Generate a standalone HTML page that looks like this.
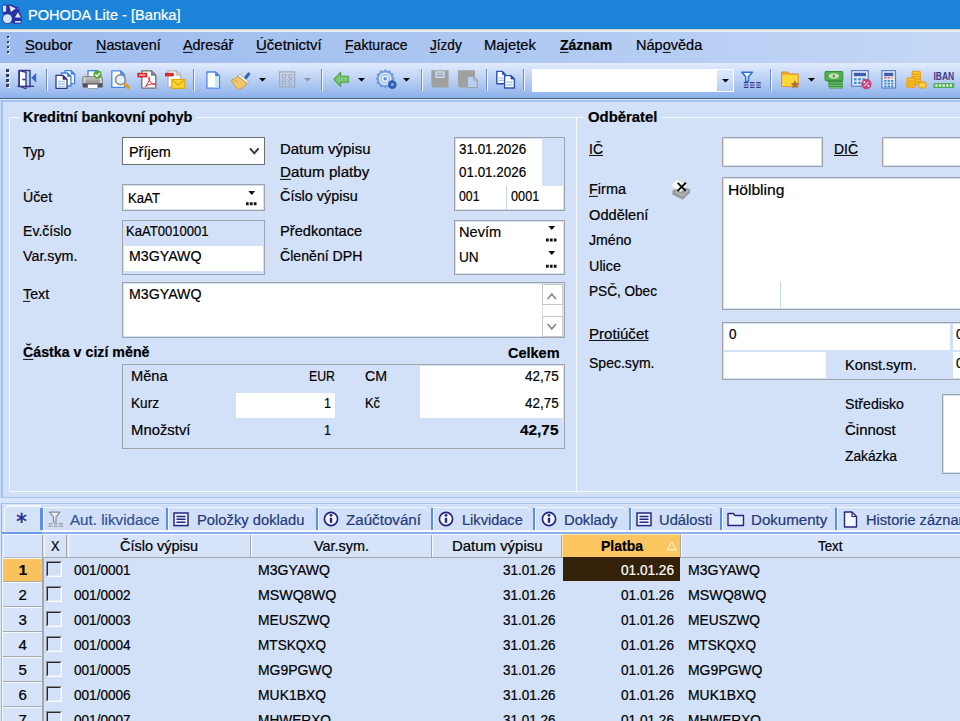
<!DOCTYPE html>
<html lang="cs"><head><meta charset="utf-8"><title>POHODA Lite - [Banka]</title>
<style>
html,body{margin:0;padding:0;}
body{width:960px;height:721px;overflow:hidden;position:relative;background:#d3e1f8;
 font-family:"Liberation Sans",sans-serif;font-size:15px;color:#000;}
#app{position:absolute;left:0;top:0;width:960px;height:721px;overflow:hidden;}
.r{position:absolute;box-sizing:content-box;}
.t{position:absolute;white-space:pre;line-height:18px;height:18px;font-size:16px;transform-origin:0 0;-webkit-text-stroke:0.220px currentColor;}
.t u{text-decoration:underline;text-underline-offset:1.500px;text-decoration-thickness:1px;}
svg{display:block;overflow:visible;}
.cb{width:14.200px;height:14.200px;border:1px solid;border-color:#8a8d92 #fdfeff #fdfeff #8a8d92;}
.cb i{display:block;box-sizing:border-box;width:100%;height:100%;border-style:solid;border-width:1.700px 1px 1px 1.700px;border-color:#2a2a2a #e6ecf7 #e6ecf7 #2a2a2a;}
</style></head>
<body><div id="app">
<div id="title" class="r" style="left:0;top:0;width:960px;height:29px;background:#1b84d8"></div>
<div class="r " style="left:0px;top:29px;width:960px;height:1px;background:#d2cfc9;"></div>
<div class="r " style="left:0px;top:30px;width:960px;height:2px;background:#e8edf7;"></div>
<div id="menubar" class="r" style="left:0;top:32px;width:960px;height:31px;background:linear-gradient(90deg,#9dbbee 0%,#a9c4f0 40%,#c4d7f6 100%)"></div>
<div id="toolbar" class="r" style="left:0;top:63px;width:960px;height:35px;border-radius:3px 0 0 0;background:linear-gradient(180deg,#e1ebfc 0%,#c9daf7 30%,#abc6f1 65%,#8db0ea 100%)"></div>
<div class="r " style="left:0px;top:98px;width:960px;height:1px;background:#4d6288;"></div>
<div class="r " style="left:0px;top:99px;width:960px;height:1px;background:#dbe6fa;"></div>
<div class="r " style="left:7.7px;top:37.0px;width:2.4px;height:2.4px;background:#ffffff;"></div>
<div class="r " style="left:6.5px;top:35.8px;width:2.4px;height:2.4px;background:#2f3d60;"></div>
<div class="r " style="left:7.7px;top:42.0px;width:2.4px;height:2.4px;background:#ffffff;"></div>
<div class="r " style="left:6.5px;top:40.8px;width:2.4px;height:2.4px;background:#2f3d60;"></div>
<div class="r " style="left:7.7px;top:46.9px;width:2.4px;height:2.4px;background:#ffffff;"></div>
<div class="r " style="left:6.5px;top:45.7px;width:2.4px;height:2.4px;background:#2f3d60;"></div>
<div class="r " style="left:7.7px;top:51.9px;width:2.4px;height:2.4px;background:#ffffff;"></div>
<div class="r " style="left:6.5px;top:50.6px;width:2.4px;height:2.4px;background:#2f3d60;"></div>
<div class="r " style="left:7.5px;top:70.5px;width:2.4px;height:2.4px;background:#ffffff;"></div>
<div class="r " style="left:6.3px;top:69.3px;width:2.4px;height:2.4px;background:#2f3d60;"></div>
<div class="r " style="left:7.5px;top:75.5px;width:2.4px;height:2.4px;background:#ffffff;"></div>
<div class="r " style="left:6.3px;top:74.2px;width:2.4px;height:2.4px;background:#2f3d60;"></div>
<div class="r " style="left:7.5px;top:80.4px;width:2.4px;height:2.4px;background:#ffffff;"></div>
<div class="r " style="left:6.3px;top:79.2px;width:2.4px;height:2.4px;background:#2f3d60;"></div>
<div class="r " style="left:7.5px;top:85.4px;width:2.4px;height:2.4px;background:#ffffff;"></div>
<div class="r " style="left:6.3px;top:84.2px;width:2.4px;height:2.4px;background:#2f3d60;"></div>
<div class="r " style="left:46px;top:69px;width:1px;height:21px;background:#6f8ec8;"></div>
<div class="r " style="left:47px;top:70px;width:1px;height:21px;background:#f2f6fd;"></div>
<div class="r " style="left:193px;top:69px;width:1px;height:21px;background:#6f8ec8;"></div>
<div class="r " style="left:194px;top:70px;width:1px;height:21px;background:#f2f6fd;"></div>
<div class="r " style="left:320.5px;top:69px;width:1px;height:21px;background:#6f8ec8;"></div>
<div class="r " style="left:321.5px;top:70px;width:1px;height:21px;background:#f2f6fd;"></div>
<div class="r " style="left:420.5px;top:69px;width:1px;height:21px;background:#6f8ec8;"></div>
<div class="r " style="left:421.5px;top:70px;width:1px;height:21px;background:#f2f6fd;"></div>
<div class="r " style="left:486px;top:69px;width:1px;height:21px;background:#6f8ec8;"></div>
<div class="r " style="left:487px;top:70px;width:1px;height:21px;background:#f2f6fd;"></div>
<div class="r " style="left:523px;top:69px;width:1px;height:21px;background:#6f8ec8;"></div>
<div class="r " style="left:524px;top:70px;width:1px;height:21px;background:#f2f6fd;"></div>
<div class="r " style="left:770px;top:69px;width:1px;height:21px;background:#6f8ec8;"></div>
<div class="r " style="left:771px;top:70px;width:1px;height:21px;background:#f2f6fd;"></div>
<svg class="r" style="left:259px;top:78px" width="7" height="4" viewBox="0 0 7 4"><path d="M0 0h7L3.5 3.6z" fill="#000"/></svg>
<svg class="r" style="left:358.3px;top:78px" width="7" height="4" viewBox="0 0 7 4"><path d="M0 0h7L3.5 3.6z" fill="#000"/></svg>
<svg class="r" style="left:403px;top:78px" width="7" height="4" viewBox="0 0 7 4"><path d="M0 0h7L3.5 3.6z" fill="#000"/></svg>
<svg class="r" style="left:303.5px;top:78px" width="7" height="4" viewBox="0 0 7 4"><path d="M0 0h7L3.5 3.6z" fill="#8d95a5"/></svg>
<svg class="r" style="left:807.5px;top:78px" width="7" height="4" viewBox="0 0 7 4"><path d="M0 0h7L3.5 3.6z" fill="#000"/></svg>
<div class="r" style="left:532px;top:69px;width:202px;height:23px;background:#fff;"></div>
<div class="r" style="left:717px;top:70px;width:16px;height:21px;background:linear-gradient(180deg,#dfe9fb,#b9cff3)"></div>
<svg class="r" style="left:722px;top:79px" width="7" height="4" viewBox="0 0 7 4"><path d="M0 0h7L3.5 3.6z" fill="#000"/></svg>
<svg class="r" style="left:0;top:62px" width="960" height="36" viewBox="0 62 960 36"><g>
<rect x="19" y="70.5" width="11" height="16" fill="#a9def6" stroke="#3b3584" stroke-width="1.4"/>
<path d="M19.3 70.6 L26 72.2 L26 88.6 L19.3 86.2 Z" fill="#fff" stroke="#3b3584" stroke-width="1.4" stroke-linejoin="round"/>
<path d="M17.5 86.3 H34" stroke="#3b3584" stroke-width="1.3"/>
<path d="M22.3 79.5 h3.2" stroke="#3b3584" stroke-width="1.6"/>
<path d="M31.3 77.7 L36.2 73 V82.5 Z" fill="#3567d0"/></g>
<g><path d="M65 70.7 H71.1 L74.6 74.2 V83.7 H65 Z" fill="#fff" stroke="#3f7fe4" stroke-width="1.3" stroke-linejoin="round"/><path d="M71.1 70.7 V74.2 H74.6 Z" fill="#3f7fe4" stroke="#3f7fe4" stroke-width="0.78" stroke-linejoin="round"/><path d="M61.3 73 H67.39999999999999 L70.89999999999999 76.5 V86 H61.3 Z" fill="#fff" stroke="#3f7fe4" stroke-width="1.3" stroke-linejoin="round"/><path d="M67.39999999999999 73 V76.5 H70.89999999999999 Z" fill="#3f7fe4" stroke="#3f7fe4" stroke-width="0.78" stroke-linejoin="round"/><path d="M56 75.3 H63 L67 79.3 V88.3 H56 Z" fill="#fff" stroke="#3b3584" stroke-width="1.3" stroke-linejoin="round"/><path d="M63 75.3 V79.3 H67 Z" fill="#3b3584" stroke="#3b3584" stroke-width="0.78" stroke-linejoin="round"/><path d="M58 81.5h7M58 84h7M58 86.3h7" stroke="#9fcdea" stroke-width="1.3"/></g>
<g><rect x="88" y="70.7" width="9.5" height="7" fill="#fff" stroke="#3f7fe4" stroke-width="1.3"/>
<rect x="82.8" y="76.6" width="19.6" height="7.400" rx="1.4" fill="#d4d4d4" stroke="#707070" stroke-width=".9"/>
<rect x="85.600" y="77.600" width="14" height="5.600" fill="#b4b4b4"/><rect x="85.600" y="80.400" width="14" height="2.800" fill="#9c9c9c"/>
<path d="M82.500 83.200 h20.200 v3.400 q0 1 -1 1 h-18.200 q-1 0 -1 -1z" fill="#545454"/>
<rect x="87.8" y="84.2" width="10" height="4.200" fill="#fff" stroke="#6a6a6a" stroke-width=".5"/>
<circle cx="97.6" cy="74.6" r="4.1" fill="#55a83c"/><path d="M95.4 74.6 l1.6 1.7 l3 -3.2" stroke="#fff" stroke-width="1.4" fill="none"/></g>
<g><path d="M111.8 70.8 H120.6 L124.6 74.8 V87.4 H111.8 Z" fill="#fff" stroke="#4a86e8" stroke-width="1.3" stroke-linejoin="round"/><path d="M120.6 70.8 V74.8 H124.6 Z" fill="#4a86e8" stroke="#4a86e8" stroke-width="0.78" stroke-linejoin="round"/><circle cx="120.4" cy="79.8" r="4.9" fill="#e2f1fb" stroke="#8a8f96" stroke-width="1.7"/><path d="M125.300 84.400 l3.200 3.100" stroke="#e39a22" stroke-width="3.200" stroke-linecap="round"/></g>
<g><path d="M141.8 70.8 H151.3 L155.8 75.3 V88.19999999999999 H141.8 Z" fill="#fff" stroke="#6f6f6f" stroke-width="1.3" stroke-linejoin="round"/><path d="M151.3 70.8 V75.3 H155.8 Z" fill="#8a8a8a" stroke="#6f6f6f" stroke-width="0.78" stroke-linejoin="round"/><rect x="137.3" y="72.8" width="10" height="4.6" fill="#d7282f"/><path d="M139 75.1h6.6" stroke="#f2a6a8" stroke-width="1.6"/><path d="M145.200 86.500 C147.500 84.500 149.500 80.500 149.600 78.200 C149.700 76.800 148.500 76.800 148.700 78.400 C149 81 151.500 83.800 154.600 84.600 C156 85 156 83.700 154.400 83.700 C151 83.700 147.500 85 145.200 86.500 Z" fill="none" stroke="#d7282f" stroke-width="1" stroke-linejoin="round"/></g>
<g><path d="M168 70.8 H176.1 L180.6 75.3 V87.0 H168 Z" fill="#fff" stroke="#b5b5b5" stroke-width="1.3" stroke-linejoin="round"/><path d="M176.1 70.8 V75.3 H180.6 Z" fill="#cfcfcf" stroke="#b5b5b5" stroke-width="0.78" stroke-linejoin="round"/><rect x="165" y="72.8" width="8.8" height="3.6" fill="#d7282f"/><rect x="171.8" y="79.5" width="13" height="8.8" fill="#ffd633" stroke="#e3a300" stroke-width="1.1"/><path d="M172.2 80 l6.1 5 l6.1 -5" fill="none" stroke="#e3a300" stroke-width="1.1"/></g>
<g><path d="M206.9 72 H215.5 L219.5 76 V88.2 H206.9 Z" fill="#fff" stroke="#4a86e8" stroke-width="1.3" stroke-linejoin="round"/><path d="M215.5 72 V76 H219.5 Z" fill="#4a86e8" stroke="#4a86e8" stroke-width="0.78" stroke-linejoin="round"/><rect x="215" y="76.5" width="3.9" height="11" fill="#c6e9f4"/></g>
<g><path d="M249.2 72.6 q1.4 .6 .9 2 l-4.2 5.6 l-2.6 -2 l4.4 -5.4 q.7 -.6 1.5 -.2z" fill="#2e66bd"/>
<path d="M239.5 74 l9.2 7.6 l-1.6 1.8 l-9.2 -7.4z" fill="#f4f4f4" stroke="#9a9a9a" stroke-width=".7"/>
<path d="M238 76.2 l8.8 7.2 q-3.5 5.2 -8.2 6.2 q-4 -2.2 -7.3 -9.6 q4.2 -.6 6.7 -3.8z" fill="#f2c76b" stroke="#c69a3e" stroke-width=".9" stroke-linejoin="round"/>
<path d="M234.5 80.8 q1.8 .9 3.3 .4" stroke="#c69a3e" stroke-width=".8" fill="none"/></g>
<g fill="none" stroke="#a6a9ae"><rect x="279.6" y="71.9" width="15" height="15" stroke-width="1.3"/>
<rect x="282.4" y="74.6" width="3.2" height="3.2" stroke-width="1"/><rect x="288.8" y="74.6" width="3.2" height="3.2" stroke-width="1"/><rect x="282.4" y="81" width="3.2" height="3.2" stroke-width="1"/>
<path d="M287 74.5v1.5M282 79.4h1.2M284.5 79.4h1.2M287 79.4l2 1.2l2-1.4l1.6 1.2M288 82l2 1l1.5-1.6M288 84.6h2M291.5 83v2" stroke-width="1"/></g>
<path d="M333.9 79.3 L340.6 72.4 V76.3 H348.3 V82.3 H340.6 V86.3 Z" fill="#7cc877" stroke="#4c9c49" stroke-width="1.1" stroke-linejoin="round"/>
<g><polygon points="394.4,78.8 392.5,80.8 393.2,83.4 390.6,84.2 389.8,86.8 387.2,86.1 385.2,88.0 383.2,86.1 380.6,86.8 379.8,84.2 377.2,83.4 377.9,80.8 376.0,78.8 377.9,76.8 377.2,74.2 379.8,73.4 380.6,70.8 383.2,71.5 385.2,69.6 387.2,71.5 389.8,70.8 390.6,73.4 393.2,74.2 392.5,76.8" fill="#76a2e2" stroke="#6b98dc" stroke-width="1" stroke-linejoin="round"/><circle cx="385.2" cy="78.8" r="6.3" fill="#e4edfa"/><circle cx="385.2" cy="78.8" r="4.2" fill="none" stroke="#8fb3ea" stroke-width="1.2"/><circle cx="385.2" cy="78.8" r="1.7" fill="#5f8fdb"/><circle cx="392.3" cy="84.6" r="4.3" fill="#2a5fb4"/><circle cx="392.3" cy="84.6" r="1.5" fill="#8db1ea"/></g>
<g><path d="M431.3 70.2 h17.3 v17.4 h-15.8 l-1.5 -1.5z" fill="#a1a1a1"/><rect x="435.2" y="71.2" width="9.6" height="6.8" fill="#c6d5f1"/><path d="M436.5 73.3h7M436.5 75.6h7" stroke="#a1a1a1" stroke-width="1.1"/></g>
<g><path d="M458 70.2 h17 v17.4 h-15.5 l-1.5 -1.5z" fill="#a1a1a1"/><path d="M467.4 76.4 h6 l3.8 3.6 v7.6 h-9.8z" fill="#b9cef3" stroke="#a1a1a1" stroke-width="1.1"/><path d="M473.4 76.4 v3.6 h3.8" fill="none" stroke="#a1a1a1" stroke-width="1"/></g>
<g><path d="M496.8 71.4 H502.40000000000003 L505.40000000000003 74.4 V83.80000000000001 H496.8 Z" fill="#fff" stroke="#2b50ae" stroke-width="1.4" stroke-linejoin="round"/><path d="M502.40000000000003 71.4 V74.4 H505.40000000000003 Z" fill="#2b50ae" stroke="#2b50ae" stroke-width="0.84" stroke-linejoin="round"/><path d="M498.5 78h5M498.5 80.4h5" stroke="#8fc3e6" stroke-width="1.2"/><path d="M504.6 75.6 H511.0 L514.4 79.0 V88.0 H504.6 Z" fill="#fff" stroke="#2b50ae" stroke-width="1.4" stroke-linejoin="round"/><path d="M511.0 75.6 V79.0 H514.4 Z" fill="#2b50ae" stroke="#2b50ae" stroke-width="0.84" stroke-linejoin="round"/><path d="M506.5 82.2h6M506.5 84.8h6" stroke="#8fc3e6" stroke-width="1.2"/></g>
<g><path d="M741.8 72.2 h10.6 l-3.9 4.6 v4.6 h-2.8 v-4.6z" fill="#eef5fd" stroke="#2f70d8" stroke-width="1.5" stroke-linejoin="round"/>
<path d="M743.8 82.6h4.6M750 82.6h4.6M756.2 82.6h4.6M743.8 85h4.6M750 85h4.6M756.2 85h4.6M743.8 87.4h4.6M750 87.4h4.6M756.2 87.4h4.6" stroke="#3a3d8f" stroke-width="1.2"/></g>
<g><path d="M781.6 72 h6.4 l1.8 2 h8.4 v12.4 h-16.6z" fill="#f0a93c" stroke="#d9942c" stroke-width="1"/>
<rect x="782.3" y="75" width="15.4" height="11" fill="#fdd835"/>
<path d="M795 80.2 l1.3 2.9 l3.1 .3 l-2.3 2.1 l.7 3.1 l-2.8 -1.6 l-2.8 1.6 l.7 -3.1 l-2.3 -2.1 l3.1 -.3z" fill="#a9713d"/></g>
<g><path d="M827.5 80 h15.3 v8.6 h-13.8z" fill="#3f9444"/><path d="M828 83h14.5M828.6 85.4h14M829.2 87.6h13.4" stroke="#7cc67f" stroke-width=".9"/>
<rect x="825" y="71.5" width="17.8" height="9.2" rx="1" fill="#4caf50" stroke="#388e3c" stroke-width="1"/>
<ellipse cx="833.9" cy="76.1" rx="5.2" ry="2.8" fill="#cfe0b4"/><path d="M832.6 76.1h2.6M833.9 74.6v3" stroke="#388e3c" stroke-width="1"/></g>
<g><rect x="851.6" y="70.6" width="16.6" height="15.6" fill="#e2eaf8" stroke="#5a80c4" stroke-width="1.2"/><rect x="853.8000000000001" y="72.8" width="12.200000000000001" height="3.4" fill="#3d5ea8"/><rect x="854.0" y="78.2" width="2.6" height="2.2" fill="#3f8bd0"/><rect x="858.2" y="78.2" width="2.6" height="2.2" fill="#3f8bd0"/><rect x="862.4" y="78.2" width="2.6" height="2.2" fill="#3f8bd0"/><rect x="854.0" y="81.8" width="2.6" height="2.2" fill="#3f8bd0"/><rect x="858.2" y="81.8" width="2.6" height="2.2" fill="#3f8bd0"/><rect x="862.4" y="81.8" width="2.6" height="2.2" fill="#3f8bd0"/><circle cx="866.4" cy="84" r="5.2" fill="#c7447f"/><path d="M864 86.4 l4.8 -4.8" stroke="#fff" stroke-width="1"/><circle cx="864.4" cy="82.2" r="1" fill="#fff"/><circle cx="868.4" cy="85.8" r="1" fill="#fff"/></g>
<g><rect x="881.9" y="70.6" width="13.6" height="17.4" fill="#e2eaf8" stroke="#5a80c4" stroke-width="1.2"/><rect x="884.1" y="72.8" width="9.2" height="3.4" fill="#3d5ea8"/><rect x="884.2" y="77.3" width="2.3" height="1.2" fill="#e0443c"/><rect x="887.6" y="77.3" width="2.3" height="1.2" fill="#e0443c"/><rect x="891.0" y="77.3" width="2.3" height="1.2" fill="#f0a800"/><rect x="884.2" y="80.0" width="2.3" height="1.8" fill="#3f8bd0"/><rect x="887.6" y="80.0" width="2.3" height="1.8" fill="#3f8bd0"/><rect x="891.0" y="80.0" width="2.3" height="1.8" fill="#3f8bd0"/><rect x="884.2" y="82.7" width="2.3" height="1.8" fill="#3f8bd0"/><rect x="887.6" y="82.7" width="2.3" height="1.8" fill="#3f8bd0"/><rect x="891.0" y="82.7" width="2.3" height="1.8" fill="#3f8bd0"/><rect x="884.2" y="85.4" width="2.3" height="1.8" fill="#3f8bd0"/><rect x="887.6" y="85.4" width="2.3" height="1.8" fill="#3f8bd0"/><rect x="891.0" y="85.4" width="2.3" height="1.8" fill="#3f8bd0"/></g>
<g><rect x="912" y="80.8" width="8.6" height="3.2" rx="1.4" fill="#f9c22c" stroke="#e29a12" stroke-width=".9"/><rect x="912" y="78.4" width="8.6" height="3.2" rx="1.4" fill="#f9c22c" stroke="#e29a12" stroke-width=".9"/><rect x="912" y="76.0" width="8.6" height="3.2" rx="1.4" fill="#f9c22c" stroke="#e29a12" stroke-width=".9"/><rect x="912" y="73.6" width="8.6" height="3.2" rx="1.4" fill="#f9c22c" stroke="#e29a12" stroke-width=".9"/><rect x="912" y="71.2" width="8.6" height="3.2" rx="1.4" fill="#f9c22c" stroke="#e29a12" stroke-width=".9"/><rect x="906.6" y="84.6" width="8.8" height="3.0" rx="1.4" fill="#f9c22c" stroke="#e29a12" stroke-width=".9"/><rect x="906.6" y="82.4" width="8.8" height="3.0" rx="1.4" fill="#f9c22c" stroke="#e29a12" stroke-width=".9"/><rect x="906.6" y="80.2" width="8.8" height="3.0" rx="1.4" fill="#f9c22c" stroke="#e29a12" stroke-width=".9"/><rect x="906.6" y="78.0" width="8.8" height="3.0" rx="1.4" fill="#f9c22c" stroke="#e29a12" stroke-width=".9"/><rect x="918.6" y="82" width="7.6" height="6" rx="1.6" fill="#f9c22c" stroke="#e29a12" stroke-width=".9"/><path d="M920.4 85h4" stroke="#fff3c4" stroke-width="1"/></g>
<g><text x="933.4" y="80" font-family="Liberation Sans, sans-serif" font-weight="bold" font-size="11.6" fill="#3b3a8e" textLength="20.8" lengthAdjust="spacingAndGlyphs">IBAN</text><rect x="933.6" y="83" width="20.6" height="5" fill="#4caf50"/><rect x="935.4" y="84.4" width="2.2" height="2.2" fill="#fff"/><rect x="939.0" y="84.4" width="2.2" height="2.2" fill="#fff"/><rect x="942.6" y="84.4" width="2.2" height="2.2" fill="#fff"/><rect x="946.2" y="84.4" width="2.2" height="2.2" fill="#fff"/><rect x="949.8" y="84.4" width="2.2" height="2.2" fill="#fff"/></g></svg>
<svg class="r" style="left:2px;top:3px" width="21" height="22" viewBox="2 3 21 22">
<path d="M2.600 5.200 q1.800 -1.600 4.200 -.8 l1.200 .6 q1.600 -1.400 3.400 -.4 l5.600 2.600 q2 -.6 2.200 1.200 l.2 3.200 q1.800 2.400 2.200 5.400 v6 q-.4 1 -1.600 .8 h-5.600 q-1.600 -.2 -2.400 -1.200 q-2.600 1.800 -6 1.200 q-3.600 -1.200 -3.800 -5 q0 -3.200 2 -4.800 q-1.800 -.4 -1.800 -2z" fill="#2b30a0"/>
<path d="M3 5.700 l3.200 -.3 l-.1 6 l-3 .5z" fill="#d9e8fb"/>
<path d="M9.300 5.500 l6.400 2.900 l-4.800 3.700z" fill="#e3eefc"/>
<path d="M17.500 8 l.9 -.2 l-.2 1.800z" fill="#c9dcf7"/>
<circle cx="7.400" cy="18.700" r="4.500" fill="#d2e3fa"/>
<path d="M17.900 12.200 l2.900 5.300 h-5.800z" fill="#dfebfc"/>
<rect x="15" y="21" width="5.800" height="1.700" fill="#c9dcf7"/></svg>
<div class="r " style="left:1px;top:100px;width:959px;height:398.3px;background:#a6c2f0;"></div>
<div class="r " style="left:0px;top:99px;width:1px;height:400px;background:#c6d8f6;"></div>
<div class="r " style="left:2.5px;top:101.5px;width:957.5px;height:395.5px;background:#d3e1f8;"></div>
<div class="r " style="left:9px;top:117px;width:10px;height:1px;background:#f6f9fe;"></div>
<div class="r " style="left:196px;top:117px;width:381px;height:1px;background:#f6f9fe;"></div>
<div class="r " style="left:9px;top:117px;width:1px;height:375px;background:#f6f9fe;"></div>
<div class="r " style="left:9px;top:491px;width:951px;height:1px;background:#f6f9fe;"></div>
<div class="r " style="left:576px;top:117px;width:1px;height:375px;background:#f6f9fe;"></div>
<div class="r " style="left:577px;top:117px;width:7px;height:1px;background:#f6f9fe;"></div>
<div class="r " style="left:662px;top:117px;width:298px;height:1px;background:#f6f9fe;"></div>
<div class="r" style="left:122px;top:137px;width:141px;height:26px;border:1px solid #6f6f6f;background:#fff"></div>
<svg class="r" style="left:249px;top:147px" width="11" height="9" viewBox="0 0 11 9"><path d="M1 1.300 L5.300 6.300 L9.600 1.300" fill="none" stroke="#383838" stroke-width="2"/></svg>
<div class="r" style="left:122px;top:184px;width:141px;height:25px;border:1px solid #9fa2a9;background:#d3e1f8"></div>
<div class="r " style="left:124px;top:186px;width:139px;height:23px;background:#fff;"></div>
<svg class="r" style="left:246px;top:191.1px" width="11" height="17" viewBox="0 0 11 17"><path d="M2.300 0 h6.900 l-3.450 4.100z" fill="#111"/><path d="M0 12.7h2.700M3.900 12.7h2.700M7.800 12.7h2.700" stroke="#111" stroke-width="3"/></svg>
<div class="r" style="left:122px;top:220px;width:141px;height:53px;border:1px solid #9fa2a9;background:#d3e1f8"></div>
<div class="r " style="left:124px;top:246px;width:139px;height:25px;background:#fff;"></div>
<div class="r" style="left:454px;top:137px;width:109px;height:72px;border:1px solid #9fa2a9;background:#d3e1f8"></div>
<div class="r " style="left:456px;top:139px;width:86px;height:47px;background:#fff;"></div>
<div class="r " style="left:456px;top:186px;width:107px;height:23px;background:#fff;"></div>
<div class="r " style="left:506px;top:186px;width:1px;height:23px;background:#c5d6f3;"></div>
<div class="r" style="left:454px;top:220px;width:109px;height:53px;border:1px solid #9fa2a9;background:#fff"></div>
<div class="r " style="left:455px;top:221px;width:109px;height:1px;background:#d3e1f8;"></div>
<div class="r " style="left:455px;top:221px;width:1px;height:53px;background:#d3e1f8;"></div>
<div class="r " style="left:455px;top:273px;width:109px;height:1px;background:#d3e1f8;"></div>
<div class="r " style="left:563px;top:221px;width:1px;height:53px;background:#d3e1f8;"></div>
<svg class="r" style="left:546px;top:226.2px" width="11" height="17" viewBox="0 0 11 17"><path d="M2.300 0 h6.900 l-3.450 4.100z" fill="#111"/><path d="M0 14.1h2.700M3.900 14.1h2.700M7.800 14.1h2.700" stroke="#111" stroke-width="3"/></svg>
<svg class="r" style="left:546px;top:251.3px" width="11" height="17" viewBox="0 0 11 17"><path d="M2.300 0 h6.900 l-3.450 4.100z" fill="#111"/><path d="M0 15.2h2.700M3.900 15.2h2.700M7.800 15.2h2.700" stroke="#111" stroke-width="3"/></svg>
<div class="r" style="left:122px;top:282px;width:441px;height:54px;border:1px solid #9fa2a9;background:#fff"></div>
<div class="r " style="left:123px;top:283px;width:441px;height:1px;background:#d3e1f8;"></div>
<div class="r " style="left:123px;top:283px;width:1px;height:54px;background:#d3e1f8;"></div>
<div class="r " style="left:123px;top:336px;width:441px;height:1px;background:#d3e1f8;"></div>
<div class="r " style="left:563px;top:283px;width:1px;height:54px;background:#d3e1f8;"></div>
<div class="r" style="left:541.500px;top:284px;width:19px;height:19px;border:1.400px solid #c9c9c9;background:#fff"></div>
<div class="r" style="left:541.500px;top:315.500px;width:19px;height:19px;border:1.400px solid #c9c9c9;background:#fff"></div>
<div class="r " style="left:541.5px;top:305px;width:1.4px;height:11px;background:#dcdcdc;"></div>
<div class="r " style="left:561.9px;top:305px;width:1.4px;height:11px;background:#dcdcdc;"></div>
<svg class="r" style="left:547px;top:292.500px" width="10" height="7" viewBox="0 0 10 7"><path d="M.6 6 L4.800 1.200 L9 6" fill="none" stroke="#8c8c8c" stroke-width="1.800"/></svg>
<svg class="r" style="left:547px;top:322.500px" width="10" height="7" viewBox="0 0 10 7"><path d="M.6 1 L4.800 5.800 L9 1" fill="none" stroke="#8c8c8c" stroke-width="1.800"/></svg>
<div class="r" style="left:122px;top:364px;width:441px;height:83px;border:1px solid #9fa2a9;background:#d3e1f8"></div>
<div class="r " style="left:420px;top:366px;width:143px;height:52px;background:#fff;"></div>
<div class="r " style="left:236px;top:393px;width:99px;height:25px;background:#fff;"></div>
<div class="r" style="left:722px;top:137px;width:99px;height:28px;border:1px solid #9fa2a9;background:#fff"></div>
<div class="r " style="left:723px;top:138px;width:99px;height:1px;background:#d3e1f8;"></div>
<div class="r " style="left:723px;top:138px;width:1px;height:28px;background:#d3e1f8;"></div>
<div class="r " style="left:723px;top:165px;width:99px;height:1px;background:#d3e1f8;"></div>
<div class="r " style="left:821px;top:138px;width:1px;height:28px;background:#d3e1f8;"></div>
<div class="r" style="left:882px;top:137px;width:98px;height:28px;border:1px solid #9fa2a9;background:#fff"></div>
<div class="r " style="left:883px;top:138px;width:98px;height:1px;background:#d3e1f8;"></div>
<div class="r " style="left:883px;top:138px;width:1px;height:28px;background:#d3e1f8;"></div>
<div class="r " style="left:883px;top:165px;width:98px;height:1px;background:#d3e1f8;"></div>
<div class="r" style="left:722px;top:177px;width:258px;height:131px;border:1px solid #9fa2a9;background:#fff"></div>
<div class="r " style="left:723px;top:178px;width:258px;height:1px;background:#d3e1f8;"></div>
<div class="r " style="left:723px;top:178px;width:1px;height:131px;background:#d3e1f8;"></div>
<div class="r " style="left:723px;top:308px;width:258px;height:1px;background:#d3e1f8;"></div>
<div class="r " style="left:780px;top:282px;width:1px;height:26px;background:#c5d6f3;"></div>
<div class="r" style="left:722px;top:322px;width:258px;height:55.6px;border:1px solid #9fa2a9;background:#fff"></div>
<div class="r " style="left:723px;top:323px;width:258px;height:1px;background:#d3e1f8;"></div>
<div class="r " style="left:723px;top:323px;width:1px;height:55.6px;background:#d3e1f8;"></div>
<div class="r " style="left:723px;top:377.6px;width:258px;height:1px;background:#d3e1f8;"></div>
<div class="r " style="left:724px;top:350px;width:236px;height:2px;background:#d3e1f8;"></div>
<div class="r " style="left:950px;top:324px;width:3px;height:54.6px;background:#d3e1f8;"></div>
<div class="r " style="left:826px;top:352px;width:124px;height:26.6px;background:#d3e1f8;"></div>
<div class="r" style="left:942px;top:394px;width:58px;height:78px;border:1px solid #9fa2a9;background:#fff"></div>
<div class="r " style="left:943px;top:395px;width:58px;height:1px;background:#d3e1f8;"></div>
<div class="r " style="left:943px;top:395px;width:1px;height:78px;background:#d3e1f8;"></div>
<div class="r " style="left:943px;top:472px;width:58px;height:1px;background:#d3e1f8;"></div>
<svg class="r" style="left:669px;top:178px" width="22" height="23" viewBox="669 178 22 23">
<path d="M672.400 190.500 l9.500 -3.500 l8.100 2 v3.700 l-7.300 7.100 l-10.300 -5.300z" fill="#9a9a9a"/>
<path d="M675 192 l7.700 3.300 l5.800 -5.500" fill="none" stroke="#b9b9b9" stroke-width="1.500"/>
<path d="M670.200 185.800 l6.700 -6.700 l10.600 5.600 l-6.600 7.100z" fill="#fbfbfb" stroke="#c9cbd0" stroke-width=".6"/>
<path d="M678.200 183.300 l7 7 M685.400 183.200 l-7.300 7.200" stroke="#0a0a0a" stroke-width="1.900" stroke-linecap="round"/></svg>
<div class="r " style="left:0px;top:498px;width:960px;height:5px;background:#d8e5fa;"></div>
<div class="r " style="left:1px;top:503px;width:959px;height:1.4px;background:#a2bff0;"></div>
<div class="r " style="left:0px;top:498px;width:1px;height:223px;background:#dbe6fa;"></div>
<div class="r " style="left:0px;top:504.4px;width:960px;height:1px;background:#d8e5fa;"></div>
<div class="r " style="left:0px;top:505px;width:960px;height:28px;background:#d1e0f8;"></div>
<div class="r " style="left:42px;top:530px;width:918px;height:2px;background:#f7fafe;"></div>
<div class="r " style="left:2px;top:532px;width:958px;height:1.8px;background:#8db0ec;"></div>
<div class="r " style="left:2px;top:532px;width:40px;height:1.8px;background:#6f9ae8;"></div>
<div class="r" style="left:4px;top:505px;width:37px;height:27px;background:#d5e3f9;border-radius:5px 0 0 0;border-top:2px solid #f6f9fe;border-left:1px solid #f6f9fe;box-sizing:border-box"></div>
<div class="r " style="left:40.3px;top:508px;width:2.3px;height:22px;background:#5c8fe6;"></div>
<div class="r " style="left:42.599999999999994px;top:508.5px;width:1px;height:21.5px;background:#f3f7fe;"></div>
<div class="r" style="left:42.599999999999994px;top:507.300px;width:119.7px;height:4px;border-top:1.300px solid #f3f7fe;border-right:1px solid #e6eefb;border-radius:0 4px 0 0"></div>
<div class="r " style="left:166px;top:508px;width:2.3px;height:22px;background:#5c8fe6;"></div>
<div class="r " style="left:168.3px;top:508.5px;width:1px;height:21.5px;background:#f3f7fe;"></div>
<div class="r" style="left:168.3px;top:507.300px;width:143.5px;height:4px;border-top:1.300px solid #f3f7fe;border-right:1px solid #e6eefb;border-radius:0 4px 0 0"></div>
<div class="r " style="left:315.5px;top:508px;width:2.3px;height:22px;background:#5c8fe6;"></div>
<div class="r " style="left:317.8px;top:508.5px;width:1px;height:21.5px;background:#f3f7fe;"></div>
<div class="r" style="left:317.8px;top:507.300px;width:109.5px;height:4px;border-top:1.300px solid #f3f7fe;border-right:1px solid #e6eefb;border-radius:0 4px 0 0"></div>
<div class="r " style="left:431px;top:508px;width:2.3px;height:22px;background:#5c8fe6;"></div>
<div class="r " style="left:433.3px;top:508.5px;width:1px;height:21.5px;background:#f3f7fe;"></div>
<div class="r" style="left:433.3px;top:507.300px;width:96px;height:4px;border-top:1.300px solid #f3f7fe;border-right:1px solid #e6eefb;border-radius:0 4px 0 0"></div>
<div class="r " style="left:533px;top:508px;width:2.3px;height:22px;background:#5c8fe6;"></div>
<div class="r " style="left:535.3px;top:508.5px;width:1px;height:21.5px;background:#f3f7fe;"></div>
<div class="r" style="left:535.3px;top:507.300px;width:89.5px;height:4px;border-top:1.300px solid #f3f7fe;border-right:1px solid #e6eefb;border-radius:0 4px 0 0"></div>
<div class="r " style="left:628.5px;top:508px;width:2.3px;height:22px;background:#5c8fe6;"></div>
<div class="r " style="left:630.8px;top:508.5px;width:1px;height:21.5px;background:#f3f7fe;"></div>
<div class="r" style="left:630.8px;top:507.300px;width:85.0px;height:4px;border-top:1.300px solid #f3f7fe;border-right:1px solid #e6eefb;border-radius:0 4px 0 0"></div>
<div class="r " style="left:719.5px;top:508px;width:2.3px;height:22px;background:#5c8fe6;"></div>
<div class="r " style="left:721.8px;top:508.5px;width:1px;height:21.5px;background:#f3f7fe;"></div>
<div class="r" style="left:721.8px;top:507.300px;width:109.0px;height:4px;border-top:1.300px solid #f3f7fe;border-right:1px solid #e6eefb;border-radius:0 4px 0 0"></div>
<div class="r " style="left:834.5px;top:508px;width:2.3px;height:22px;background:#5c8fe6;"></div>
<div class="r " style="left:836.8px;top:508.5px;width:1px;height:21.5px;background:#f3f7fe;"></div>
<div class="r" style="left:836.8px;top:507.300px;width:124.5px;height:4px;border-top:1.300px solid #f3f7fe;border-right:1px solid #e6eefb;border-radius:0 4px 0 0"></div>
<svg class="r" style="left:173.3px;top:512px" width="16" height="15" viewBox="0 0 16 15"><rect x="1" y="1" width="14" height="12.600" fill="#eef3fc" stroke="#25267f" stroke-width="1.500"/><path d="M3.500 4.400h9M3.500 7.300h9M3.500 10.200h9" stroke="#25267f" stroke-width="1.500"/></svg>
<svg class="r" style="left:635.8px;top:512px" width="16" height="15" viewBox="0 0 16 15"><rect x="1" y="1" width="14" height="12.600" fill="#eef3fc" stroke="#25267f" stroke-width="1.500"/><path d="M3.500 4.400h9M3.500 7.300h9M3.500 10.200h9" stroke="#25267f" stroke-width="1.500"/></svg>
<svg class="r" style="left:323.2px;top:511px" width="16" height="16" viewBox="0 0 16 16"><circle cx="8" cy="8" r="6.600" fill="#f4f7fd" stroke="#25267f" stroke-width="1.700"/><path d="M8 6.800v5" stroke="#25267f" stroke-width="2.400"/><circle cx="8" cy="4.300" r="1.400" fill="#25267f"/></svg>
<svg class="r" style="left:438.4px;top:511px" width="16" height="16" viewBox="0 0 16 16"><circle cx="8" cy="8" r="6.600" fill="#f4f7fd" stroke="#25267f" stroke-width="1.700"/><path d="M8 6.800v5" stroke="#25267f" stroke-width="2.400"/><circle cx="8" cy="4.300" r="1.400" fill="#25267f"/></svg>
<svg class="r" style="left:540.8px;top:511px" width="16" height="16" viewBox="0 0 16 16"><circle cx="8" cy="8" r="6.600" fill="#f4f7fd" stroke="#25267f" stroke-width="1.700"/><path d="M8 6.800v5" stroke="#25267f" stroke-width="2.400"/><circle cx="8" cy="4.300" r="1.400" fill="#25267f"/></svg>
<svg class="r" style="left:727px;top:512px" width="18" height="15" viewBox="0 0 18 15"><path d="M1 13.500 V1.500 h5.500 l1.500 2 h8.500 v10z" fill="#e6eefb" stroke="#25267f" stroke-width="1.400" stroke-linejoin="round"/></svg>
<svg class="r" style="left:843px;top:511px" width="15" height="17" viewBox="0 0 15 17"><path d="M1.500 1 h7.500 l4.500 4.500 v10.500 h-12z" fill="#f4f7fd" stroke="#25267f" stroke-width="1.400" stroke-linejoin="round"/><path d="M9 1 v4.500 h4.500" fill="none" stroke="#25267f" stroke-width="1.200"/></svg>
<svg class="r" style="left:48px;top:511px" width="16" height="16" viewBox="0 0 16 16"><path d="M1.500 1.200 h10.500 l-4 5 v4.800 h-2.500 v-4.800z" fill="#e8eef9" stroke="#8a8d92" stroke-width="1.200" stroke-linejoin="round"/><path d="M.5 12.800h4M5.800 12.800h4M11 12.800h4M.5 15.200h4M5.800 15.200h4M11 15.200h4" stroke="#8a8d92" stroke-width="1"/></svg>
<div class="r " style="left:2px;top:534px;width:958px;height:187px;background:#d3e1f8;"></div>
<div class="r " style="left:1px;top:503px;width:1.3px;height:218px;background:#93b4ec;"></div>
<div class="r " style="left:3px;top:534px;width:40px;height:23px;background:#d6e3f9;"></div>
<div class="r " style="left:3px;top:534px;width:40px;height:1px;background:#f6f9fe;"></div>
<div class="r " style="left:3px;top:534px;width:1px;height:23px;background:#f6f9fe;"></div>
<div class="r " style="left:42px;top:535px;width:1.3px;height:22px;background:#a3a6ab;"></div>
<div class="r " style="left:44px;top:534px;width:23px;height:23px;background:#d6e3f9;"></div>
<div class="r " style="left:44px;top:534px;width:23px;height:1px;background:#f6f9fe;"></div>
<div class="r " style="left:44px;top:534px;width:1px;height:23px;background:#f6f9fe;"></div>
<div class="r " style="left:66px;top:535px;width:1.3px;height:22px;background:#a3a6ab;"></div>
<div class="r " style="left:67.5px;top:534px;width:183px;height:23px;background:#d6e3f9;"></div>
<div class="r " style="left:67.5px;top:534px;width:183px;height:1px;background:#f6f9fe;"></div>
<div class="r " style="left:67.5px;top:534px;width:1px;height:23px;background:#f6f9fe;"></div>
<div class="r " style="left:249.5px;top:535px;width:1.3px;height:22px;background:#a3a6ab;"></div>
<div class="r " style="left:250.5px;top:534px;width:181px;height:23px;background:#d6e3f9;"></div>
<div class="r " style="left:250.5px;top:534px;width:181px;height:1px;background:#f6f9fe;"></div>
<div class="r " style="left:250.5px;top:534px;width:1px;height:23px;background:#f6f9fe;"></div>
<div class="r " style="left:430.5px;top:535px;width:1.3px;height:22px;background:#a3a6ab;"></div>
<div class="r " style="left:431.5px;top:534px;width:130.5px;height:23px;background:#d6e3f9;"></div>
<div class="r " style="left:431.5px;top:534px;width:130.5px;height:1px;background:#f6f9fe;"></div>
<div class="r " style="left:431.5px;top:534px;width:1px;height:23px;background:#f6f9fe;"></div>
<div class="r " style="left:561.0px;top:535px;width:1.3px;height:22px;background:#a3a6ab;"></div>
<div class="r " style="left:562px;top:534px;width:119px;height:23px;background:#fbc55f;"></div>
<div class="r " style="left:562px;top:534px;width:119px;height:1px;background:#fde3ab;"></div>
<div class="r " style="left:562px;top:534px;width:1px;height:23px;background:#fde3ab;"></div>
<svg class="r" style="left:665.700px;top:540.700px" width="11.400" height="10" viewBox="0 0 13 10" preserveAspectRatio="none"><path d="M1 8.800 L6.500 1 L12 8.800z" fill="none" stroke="#fff" stroke-width="1"/><path d="M6.500 1 L12 8.800 H1" fill="none" stroke="#fde9c0" stroke-width="1"/></svg>
<div class="r " style="left:680px;top:535px;width:1.3px;height:22px;background:#a3a6ab;"></div>
<div class="r " style="left:681px;top:534px;width:298.6px;height:23px;background:#d6e3f9;"></div>
<div class="r " style="left:681px;top:534px;width:298.6px;height:1px;background:#f6f9fe;"></div>
<div class="r " style="left:681px;top:534px;width:1px;height:23px;background:#f6f9fe;"></div>
<div class="r " style="left:978.6px;top:535px;width:1.3px;height:22px;background:#a3a6ab;"></div>
<div class="r " style="left:2px;top:556.5px;width:41px;height:1.3px;background:#b4b7bc;"></div>
<div class="r " style="left:43px;top:556.5px;width:917px;height:1.3px;background:#a3a6ab;"></div>
<div class="r " style="left:3.2px;top:557.7px;width:39.2px;height:1.3px;background:#f6f9fe;"></div>
<div class="r " style="left:3.2px;top:559px;width:39.2px;height:22.1px;background:#f9c25c;"></div>
<div class="r " style="left:2.3px;top:557.4px;width:1px;height:25px;background:#f3f7fe;"></div>
<div class="r " style="left:3.2px;top:581.1px;width:40px;height:1.3px;background:#a6a8ad;"></div>
<div class="r " style="left:42.3px;top:557.7px;width:1.4px;height:25px;background:#a6a8ad;"></div>
<div class="r cb" style="left:46.200px;top:561.3px"><i></i></div>
<div class="r " style="left:562.5px;top:557px;width:117.2px;height:23.8px;background:#33210a;"></div>
<div class="r " style="left:3.2px;top:583.4px;width:39.2px;height:22.7px;background:#d6e3f9;"></div>
<div class="r " style="left:3.2px;top:582.4px;width:39.2px;height:1.1px;background:#f6f9fe;"></div>
<div class="r " style="left:2.3px;top:582.4px;width:1px;height:25px;background:#f3f7fe;"></div>
<div class="r " style="left:3.2px;top:606.1px;width:40px;height:1.3px;background:#a6a8ad;"></div>
<div class="r " style="left:42.3px;top:582.7px;width:1.4px;height:25px;background:#a6a8ad;"></div>
<div class="r cb" style="left:46.200px;top:586.3px"><i></i></div>
<div class="r " style="left:3.2px;top:608.4px;width:39.2px;height:22.7px;background:#d6e3f9;"></div>
<div class="r " style="left:3.2px;top:607.4px;width:39.2px;height:1.1px;background:#f6f9fe;"></div>
<div class="r " style="left:2.3px;top:607.4px;width:1px;height:25px;background:#f3f7fe;"></div>
<div class="r " style="left:3.2px;top:631.1px;width:40px;height:1.3px;background:#a6a8ad;"></div>
<div class="r " style="left:42.3px;top:607.7px;width:1.4px;height:25px;background:#a6a8ad;"></div>
<div class="r cb" style="left:46.200px;top:611.3px"><i></i></div>
<div class="r " style="left:3.2px;top:633.4px;width:39.2px;height:22.7px;background:#d6e3f9;"></div>
<div class="r " style="left:3.2px;top:632.4px;width:39.2px;height:1.1px;background:#f6f9fe;"></div>
<div class="r " style="left:2.3px;top:632.4px;width:1px;height:25px;background:#f3f7fe;"></div>
<div class="r " style="left:3.2px;top:656.1px;width:40px;height:1.3px;background:#a6a8ad;"></div>
<div class="r " style="left:42.3px;top:632.7px;width:1.4px;height:25px;background:#a6a8ad;"></div>
<div class="r cb" style="left:46.200px;top:636.3px"><i></i></div>
<div class="r " style="left:3.2px;top:658.4px;width:39.2px;height:22.7px;background:#d6e3f9;"></div>
<div class="r " style="left:3.2px;top:657.4px;width:39.2px;height:1.1px;background:#f6f9fe;"></div>
<div class="r " style="left:2.3px;top:657.4px;width:1px;height:25px;background:#f3f7fe;"></div>
<div class="r " style="left:3.2px;top:681.1px;width:40px;height:1.3px;background:#a6a8ad;"></div>
<div class="r " style="left:42.3px;top:657.7px;width:1.4px;height:25px;background:#a6a8ad;"></div>
<div class="r cb" style="left:46.200px;top:661.3px"><i></i></div>
<div class="r " style="left:3.2px;top:683.4px;width:39.2px;height:22.7px;background:#d6e3f9;"></div>
<div class="r " style="left:3.2px;top:682.4px;width:39.2px;height:1.1px;background:#f6f9fe;"></div>
<div class="r " style="left:2.3px;top:682.4px;width:1px;height:25px;background:#f3f7fe;"></div>
<div class="r " style="left:3.2px;top:706.1px;width:40px;height:1.3px;background:#a6a8ad;"></div>
<div class="r " style="left:42.3px;top:682.7px;width:1.4px;height:25px;background:#a6a8ad;"></div>
<div class="r cb" style="left:46.200px;top:686.3px"><i></i></div>
<div class="r " style="left:3.2px;top:708.4px;width:39.2px;height:22.7px;background:#d6e3f9;"></div>
<div class="r " style="left:3.2px;top:707.4px;width:39.2px;height:1.1px;background:#f6f9fe;"></div>
<div class="r " style="left:2.3px;top:707.4px;width:1px;height:25px;background:#f3f7fe;"></div>
<div class="r " style="left:3.2px;top:731.1px;width:40px;height:1.3px;background:#a6a8ad;"></div>
<div class="r " style="left:42.3px;top:707.7px;width:1.4px;height:25px;background:#a6a8ad;"></div>
<div class="r cb" style="left:46.200px;top:711.3px"><i></i></div>
<span class="t " style="left:27.50px;top:6px;transform:scale(0.9729,1);transform-origin:0 14px;color:#fff;font-size:15px;">POHODA Lite - [Banka]</span>
<span class="t m" style="left:25.00px;top:36px;transform:scale(0.9201,0.945);transform-origin:0 14px;"><u>S</u>oubor</span>
<span class="t m" style="left:95.50px;top:36px;transform:scale(0.8974,0.945);transform-origin:0 14px;"><u>N</u>astavení</span>
<span class="t m" style="left:182.50px;top:36px;transform:scale(0.8975,0.945);transform-origin:0 14px;"><u>A</u>dresář</span>
<span class="t m" style="left:255.50px;top:36px;transform:scale(0.9360,0.945);transform-origin:0 14px;"><u>Ú</u>četnictví</span>
<span class="t m" style="left:344.50px;top:36px;transform:scale(0.8794,0.945);transform-origin:0 14px;"><u>F</u>akturace</span>
<span class="t m" style="left:429.50px;top:36px;transform:scale(0.8485,0.945);transform-origin:0 14px;"><u>J</u>ízdy</span>
<span class="t m" style="left:484.20px;top:36px;transform:scale(0.9275,0.945);transform-origin:0 14px;">Maje<u>t</u>ek</span>
<span class="t m" style="left:635.70px;top:36px;transform:scale(0.9082,0.945);transform-origin:0 14px;">Náp<u>o</u>věda</span>
<span class="t m" style="left:559.50px;top:36px;transform:scale(0.8757,0.945);transform-origin:0 14px;font-weight:bold;"><u>Z</u>áznam</span>
<span class="t " style="left:23.20px;top:108px;transform:scale(0.9029,0.945);transform-origin:0 14px;font-weight:bold;">Kreditní bankovní pohyb</span>
<span class="t " style="left:588.00px;top:108px;transform:scale(0.9298,0.945);transform-origin:0 14px;font-weight:bold;">Odběratel</span>
<span class="t " style="left:23.20px;top:143px;transform:scale(0.8407,0.945);transform-origin:0 14px;">Typ</span>
<span class="t " style="left:23.20px;top:188px;transform:scale(0.8869,0.945);transform-origin:0 14px;">Účet</span>
<span class="t " style="left:23.20px;top:222px;transform:scale(0.8804,0.945);transform-origin:0 14px;">Ev.číslo</span>
<span class="t " style="left:23.20px;top:247px;transform:scale(0.8923,0.945);transform-origin:0 14px;">Var.sym.</span>
<span class="t " style="left:23.20px;top:285px;transform:scale(0.8919,0.945);transform-origin:0 14px;"><u>T</u>ext</span>
<span class="t " style="left:22.60px;top:343px;transform:scale(0.8889,0.945);transform-origin:0 14px;font-weight:bold;"><u>Č</u>ástka v cizí měně</span>
<span class="t " style="left:280.30px;top:140px;transform:scale(0.9331,0.945);transform-origin:0 14px;">Datum výpisu</span>
<span class="t " style="left:280.30px;top:163px;transform:scale(0.9476,0.945);transform-origin:0 14px;"><u>D</u>atum platby</span>
<span class="t " style="left:280.30px;top:187px;transform:scale(0.9002,0.945);transform-origin:0 14px;">Číslo výpisu</span>
<span class="t " style="left:280.30px;top:222px;transform:scale(0.9144,0.945);transform-origin:0 14px;">Předkontace</span>
<span class="t " style="left:280.30px;top:247px;transform:scale(0.8828,0.945);transform-origin:0 14px;">Členění DPH</span>
<span class="t " style="left:129.00px;top:143px;transform:scale(0.9016,0.945);transform-origin:0 14px;">Příjem</span>
<span class="t " style="left:128.00px;top:189px;transform:scale(0.8238,0.945);transform-origin:0 14px;">KaAT</span>
<span class="t " style="left:125.80px;top:222px;transform:scale(0.8153,0.945);transform-origin:0 14px;">KaAT0010001</span>
<span class="t " style="left:129.00px;top:247px;transform:scale(0.8862,0.945);transform-origin:0 14px;">M3GYAWQ</span>
<span class="t " style="left:459.00px;top:140px;transform:scale(0.8384,0.945);transform-origin:0 14px;">31.01.2026</span>
<span class="t " style="left:459.00px;top:163px;transform:scale(0.8384,0.945);transform-origin:0 14px;">01.01.2026</span>
<span class="t " style="left:459.00px;top:187px;transform:scale(0.7673,0.945);transform-origin:0 14px;">001</span>
<span class="t " style="left:511.30px;top:187px;transform:scale(0.7944,0.945);transform-origin:0 14px;">0001</span>
<span class="t " style="left:458.70px;top:223px;transform:scale(0.9124,0.945);transform-origin:0 14px;">Nevím</span>
<span class="t " style="left:458.70px;top:248px;transform:scale(0.8519,0.945);transform-origin:0 14px;">UN</span>
<span class="t " style="left:129.00px;top:285px;transform:scale(0.8862,0.945);transform-origin:0 14px;">M3GYAWQ</span>
<span class="t " style="left:130.80px;top:367px;transform:scale(0.9139,0.945);transform-origin:0 14px;">Měna</span>
<span class="t " style="left:130.80px;top:394px;transform:scale(0.8509,0.945);transform-origin:0 14px;">Kurz</span>
<span class="t " style="left:130.80px;top:421px;transform:scale(0.9290,0.945);transform-origin:0 14px;">Množství</span>
<span class="t " style="left:309.30px;top:367px;transform:scale(0.7693,0.945);transform-origin:0 14px;">EUR</span>
<span class="t " style="left:364.80px;top:367px;transform:scale(0.8839,0.945);transform-origin:0 14px;">CM</span>
<span class="t " style="left:364.80px;top:394px;transform:scale(0.8033,0.945);transform-origin:0 14px;">Kč</span>
<span class="t " style="left:324.00px;top:394px;transform:scale(0.7860,0.945);transform-origin:0 14px;">1</span>
<span class="t " style="left:324.00px;top:421px;transform:scale(0.7860,0.945);transform-origin:0 14px;">1</span>
<span class="t " style="left:524.80px;top:367px;transform:scale(0.8409,0.945);transform-origin:0 14px;">42,75</span>
<span class="t " style="left:524.80px;top:394px;transform:scale(0.8409,0.945);transform-origin:0 14px;">42,75</span>
<span class="t " style="left:520.00px;top:421px;transform:scale(0.9606,0.945);transform-origin:0 14px;font-weight:bold;">42,75</span>
<span class="t " style="left:507.90px;top:344px;transform:scale(0.9058,0.945);transform-origin:0 14px;font-weight:bold;">Celkem</span>
<span class="t " style="left:588.70px;top:140px;transform:scale(0.8741,0.945);transform-origin:0 14px;text-decoration:underline;">IČ</span>
<span class="t " style="left:833.70px;top:140px;transform:scale(0.8703,0.945);transform-origin:0 14px;text-decoration:underline;">DIČ</span>
<span class="t " style="left:588.70px;top:180px;transform:scale(0.9045,0.945);transform-origin:0 14px;"><u>F</u>irma</span>
<span class="t " style="left:588.70px;top:206px;transform:scale(0.9154,0.945);transform-origin:0 14px;">Oddělení</span>
<span class="t " style="left:588.70px;top:231px;transform:scale(0.8846,0.945);transform-origin:0 14px;">Jméno</span>
<span class="t " style="left:588.70px;top:257px;transform:scale(0.8990,0.945);transform-origin:0 14px;">Ulice</span>
<span class="t " style="left:588.70px;top:282px;transform:scale(0.8492,0.945);transform-origin:0 14px;">PSČ, Obec</span>
<span class="t " style="left:589.20px;top:325px;transform:scale(0.9416,0.945);transform-origin:0 14px;text-decoration:underline;">Protiúčet</span>
<span class="t " style="left:589.20px;top:354px;transform:scale(0.8766,0.945);transform-origin:0 14px;">Spec.sym.</span>
<span class="t " style="left:845.30px;top:356px;transform:scale(0.9056,0.945);transform-origin:0 14px;">Konst.sym.</span>
<span class="t " style="left:845.30px;top:395px;transform:scale(0.8841,0.945);transform-origin:0 14px;">Středisko</span>
<span class="t " style="left:845.30px;top:421px;transform:scale(0.9356,0.945);transform-origin:0 14px;">Činnost</span>
<span class="t " style="left:845.30px;top:447px;transform:scale(0.8595,0.945);transform-origin:0 14px;">Zakázka</span>
<span class="t " style="left:728.20px;top:181px;transform:scale(0.9762,0.945);transform-origin:0 14px;">Hölbling</span>
<span class="t " style="left:728.70px;top:325px;transform:scale(0.8421,0.945);transform-origin:0 14px;">0</span>
<span class="t " style="left:955.50px;top:325px;transform:scale(0.8421,0.945);transform-origin:0 14px;">0</span>
<span class="t " style="left:955.50px;top:354px;transform:scale(0.8421,0.945);transform-origin:0 14px;">0</span>
<span class="t" id="star" style="left:16.300px;top:512px;font-family:'DejaVu Sans',sans-serif;font-size:21px;line-height:21px;height:21px;color:#25258f;-webkit-text-stroke:0.500px #25258f">*</span>
<span class="t " style="left:70.00px;top:511px;transform:scale(0.9487,0.945);transform-origin:0 14px;color:#34508f;">Aut. likvidace</span>
<span class="t " style="left:197.00px;top:511px;transform:scale(0.9220,0.945);transform-origin:0 14px;color:#26397b;">Položky dokladu</span>
<span class="t " style="left:346.20px;top:511px;transform:scale(0.9467,0.945);transform-origin:0 14px;color:#26397b;">Zaúčtování</span>
<span class="t " style="left:461.70px;top:511px;transform:scale(0.9109,0.945);transform-origin:0 14px;color:#26397b;">Likvidace</span>
<span class="t " style="left:564.20px;top:511px;transform:scale(0.9214,0.945);transform-origin:0 14px;color:#26397b;">Doklady</span>
<span class="t " style="left:659.20px;top:511px;transform:scale(0.9212,0.945);transform-origin:0 14px;color:#26397b;">Události</span>
<span class="t " style="left:750.60px;top:511px;transform:scale(0.9436,0.945);transform-origin:0 14px;color:#26397b;">Dokumenty</span>
<span class="t " style="left:865.70px;top:511px;transform:scale(0.9136,0.945);transform-origin:0 14px;color:#26397b;">Historie záznamu</span>
<span class="t " style="left:51.25px;top:537px;transform:scale(0.8500,1);transform-origin:0 14px;font-size:15px;">X</span>
<span class="t " style="left:120.00px;top:537px;transform:scale(0.9646,1);transform-origin:0 14px;font-size:15px;">Číslo výpisu</span>
<span class="t " style="left:313.50px;top:537px;transform:scale(0.9607,1);transform-origin:0 14px;font-size:15px;">Var.sym.</span>
<span class="t " style="left:451.50px;top:537px;transform:scale(0.9959,1);transform-origin:0 14px;font-size:15px;">Datum výpisu</span>
<span class="t " style="left:600.70px;top:537px;transform:scale(0.9330,1);transform-origin:0 14px;font-weight:bold;font-size:15px;">Platba</span>
<span class="t " style="left:818.05px;top:537px;transform:scale(0.8904,1);transform-origin:0 14px;font-size:15px;">Text</span>
<span class="t " style="left:18.66px;top:561px;font-weight:bold;font-size:15px;">1</span>
<span class="t " style="left:74.20px;top:561px;transform:scale(0.9045,1);transform-origin:0 14px;font-size:15px;">001/0001</span>
<span class="t " style="left:258.00px;top:561px;transform:scale(0.9391,1);transform-origin:0 14px;font-size:15px;">M3GYAWQ</span>
<span class="t " style="left:502.50px;top:561px;transform:scale(0.8989,1);transform-origin:0 14px;font-size:15px;">31.01.26</span>
<span class="t " style="left:621.20px;top:561px;transform:scale(0.9074,1);transform-origin:0 14px;color:#fff;font-size:15px;">01.01.26</span>
<span class="t " style="left:688.00px;top:561px;transform:scale(0.9391,1);transform-origin:0 14px;font-size:15px;">M3GYAWQ</span>
<span class="t " style="left:18.46px;top:586px;font-size:15px;">2</span>
<span class="t " style="left:74.20px;top:586px;transform:scale(0.9045,1);transform-origin:0 14px;font-size:15px;">001/0002</span>
<span class="t " style="left:258.00px;top:586px;transform:scale(0.9491,1);transform-origin:0 14px;font-size:15px;">MSWQ8WQ</span>
<span class="t " style="left:502.50px;top:586px;transform:scale(0.8989,1);transform-origin:0 14px;font-size:15px;">31.01.26</span>
<span class="t " style="left:621.20px;top:586px;transform:scale(0.9074,1);transform-origin:0 14px;font-size:15px;">01.01.26</span>
<span class="t " style="left:688.00px;top:586px;transform:scale(0.9491,1);transform-origin:0 14px;font-size:15px;">MSWQ8WQ</span>
<span class="t " style="left:18.46px;top:611px;font-size:15px;">3</span>
<span class="t " style="left:74.20px;top:611px;transform:scale(0.9045,1);transform-origin:0 14px;font-size:15px;">001/0003</span>
<span class="t " style="left:258.00px;top:611px;transform:scale(0.9207,1);transform-origin:0 14px;font-size:15px;">MEUSZWQ</span>
<span class="t " style="left:502.50px;top:611px;transform:scale(0.8989,1);transform-origin:0 14px;font-size:15px;">31.01.26</span>
<span class="t " style="left:621.20px;top:611px;transform:scale(0.9074,1);transform-origin:0 14px;font-size:15px;">01.01.26</span>
<span class="t " style="left:688.00px;top:611px;transform:scale(0.9207,1);transform-origin:0 14px;font-size:15px;">MEUSZWQ</span>
<span class="t " style="left:18.46px;top:636px;font-size:15px;">4</span>
<span class="t " style="left:74.20px;top:636px;transform:scale(0.9045,1);transform-origin:0 14px;font-size:15px;">001/0004</span>
<span class="t " style="left:258.00px;top:636px;transform:scale(0.9067,1);transform-origin:0 14px;font-size:15px;">MTSKQXQ</span>
<span class="t " style="left:502.50px;top:636px;transform:scale(0.8989,1);transform-origin:0 14px;font-size:15px;">31.01.26</span>
<span class="t " style="left:621.20px;top:636px;transform:scale(0.9074,1);transform-origin:0 14px;font-size:15px;">01.01.26</span>
<span class="t " style="left:688.00px;top:636px;transform:scale(0.9067,1);transform-origin:0 14px;font-size:15px;">MTSKQXQ</span>
<span class="t " style="left:18.46px;top:661px;font-size:15px;">5</span>
<span class="t " style="left:74.20px;top:661px;transform:scale(0.9045,1);transform-origin:0 14px;font-size:15px;">001/0005</span>
<span class="t " style="left:258.00px;top:661px;transform:scale(0.9298,1);transform-origin:0 14px;font-size:15px;">MG9PGWQ</span>
<span class="t " style="left:502.50px;top:661px;transform:scale(0.8989,1);transform-origin:0 14px;font-size:15px;">31.01.26</span>
<span class="t " style="left:621.20px;top:661px;transform:scale(0.9074,1);transform-origin:0 14px;font-size:15px;">01.01.26</span>
<span class="t " style="left:688.00px;top:661px;transform:scale(0.9298,1);transform-origin:0 14px;font-size:15px;">MG9PGWQ</span>
<span class="t " style="left:18.46px;top:686px;font-size:15px;">6</span>
<span class="t " style="left:74.20px;top:686px;transform:scale(0.9045,1);transform-origin:0 14px;font-size:15px;">001/0006</span>
<span class="t " style="left:258.00px;top:686px;transform:scale(0.9271,1);transform-origin:0 14px;font-size:15px;">MUK1BXQ</span>
<span class="t " style="left:502.50px;top:686px;transform:scale(0.8989,1);transform-origin:0 14px;font-size:15px;">31.01.26</span>
<span class="t " style="left:621.20px;top:686px;transform:scale(0.9074,1);transform-origin:0 14px;font-size:15px;">01.01.26</span>
<span class="t " style="left:688.00px;top:686px;transform:scale(0.9271,1);transform-origin:0 14px;font-size:15px;">MUK1BXQ</span>
<span class="t " style="left:18.46px;top:711px;font-size:15px;">7</span>
<span class="t " style="left:74.20px;top:711px;transform:scale(0.9045,1);transform-origin:0 14px;font-size:15px;">001/0007</span>
<span class="t " style="left:258.00px;top:711px;transform:scale(0.9127,1);transform-origin:0 14px;font-size:15px;">MHWERXQ</span>
<span class="t " style="left:502.50px;top:711px;transform:scale(0.8989,1);transform-origin:0 14px;font-size:15px;">31.01.26</span>
<span class="t " style="left:621.20px;top:711px;transform:scale(0.9074,1);transform-origin:0 14px;font-size:15px;">01.01.26</span>
<span class="t " style="left:688.00px;top:711px;transform:scale(0.9127,1);transform-origin:0 14px;font-size:15px;">MHWERXQ</span>
</div></body></html>
